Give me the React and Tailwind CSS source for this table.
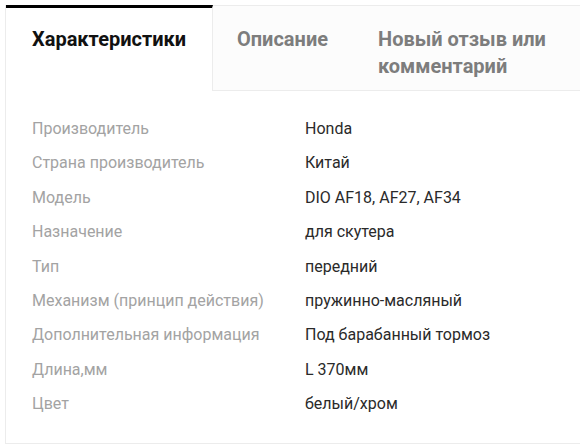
export default function App() {
  const rows = [
    ['Производитель', 'Honda'],
    ['Страна производитель', 'Китай'],
    ['Модель', 'DIO AF18, AF27, AF34'],
    ['Назначение', 'для скутера'],
    ['Тип', 'передний'],
    ['Механизм (принцип действия)', 'пружинно-масляный'],
    ['Дополнительная информация', 'Под барабанный тормоз'],
    ['Длина,мм', 'L 370мм'],
    ['Цвет', 'белый/хром'],
  ]

  return (
    <div className="h-[448px] w-[580px] bg-white pt-[5px] font-['Roboto',sans-serif]">
      <div className="ml-[5px] h-[439px] border-b border-l border-[#ececec] bg-white">
        <div className="flex h-[86px]">
          <div className="w-[207px] border-r border-t-[3px] border-r-[#ececec] border-t-black bg-white pl-[26px] pt-[18px] text-[20px] font-bold leading-[27px] text-[#111]">
            Характеристики
          </div>
          <div className="flex flex-1 gap-[50px] border-b border-t border-[#ececec] bg-[#fcfcfc] pl-[24px] pt-[20px] text-[20px] font-bold leading-[27px] text-[#7d7d7d]">
            <div>Описание</div>
            <div className="w-[185px]">Новый отзыв или комментарий</div>
          </div>
        </div>
        <div className="pt-[27px]">
          {rows.map(([k, v]) => (
            <div key={k} className="flex h-[34.4px] items-start text-[16px] leading-[22px]">
              <div className="w-[299px] pl-[26px] text-[#a3a3a3]">{k}</div>
              <div className="text-[#2a2a2a]">{v}</div>
            </div>
          ))}
        </div>
      </div>
    </div>
  )
}
